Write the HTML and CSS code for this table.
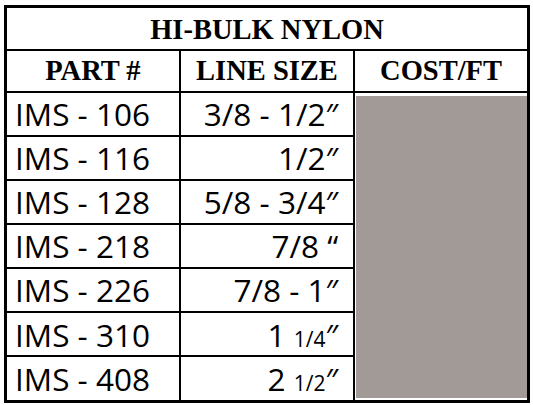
FILE: index.html
```html
<!DOCTYPE html>
<html lang="en">
<head>
    <meta charset="UTF-8">
    <title>Hi-Bulk Nylon</title>
    <link rel="stylesheet" href="styles.css">
</head>
<body>
    <table class="price-table">
        <tr class="title-row">
            <th colspan="3">HI-BULK NYLON</th>
        </tr>
        <tr class="head-row">
            <th>PART #</th>
            <th>LINE SIZE</th>
            <th>COST/FT</th>
        </tr>
        <tr>
            <td class="part">IMS - 106</td>
            <td class="size">3/8 - 1/2″</td>
            <td class="cost" rowspan="7"><div class="cost-fill"></div></td>
        </tr>
        <tr>
            <td class="part">IMS - 116</td>
            <td class="size">1/2″</td>
        </tr>
        <tr>
            <td class="part">IMS - 128</td>
            <td class="size">5/8 - 3/4″</td>
        </tr>
        <tr>
            <td class="part">IMS - 218</td>
            <td class="size">7/8 “</td>
        </tr>
        <tr>
            <td class="part">IMS - 226</td>
            <td class="size">7/8 - 1″</td>
        </tr>
        <tr>
            <td class="part">IMS - 310</td>
            <td class="size">1 <span class="frac">1/4</span>″</td>
        </tr>
        <tr>
            <td class="part">IMS - 408</td>
            <td class="size">2 <span class="frac">1/2</span>″</td>
        </tr>
    </table>
</body>
</html>
```

FILE: styles.css
```css
/* Page */
body {
    margin: 0;
    padding: 5px 3px 0 4px;
    background-color: #fff;
}

/* Table */
.price-table {
    width: 526px;
    border-collapse: collapse;
    border: 3px solid #000;
    table-layout: fixed;
}

.price-table th,
.price-table td {
    border: 2px solid #000;
    padding: 0;
}

/* Header rows */
.price-table th {
    font-family: "Liberation Serif", "Times New Roman", serif;
    font-weight: bold;
    font-size: 28.5px;
    color: #000;
    text-align: center;
}

.title-row {
    height: 43px;
}

.title-row th {
    padding-top: 3px;
}

.head-row {
    height: 42px;
}

.head-row th {
    padding-top: 1px;
}

/* Body rows */
.price-table td {
    font-family: "Open Sans", sans-serif;
    font-size: 31.5px;
    color: #000;
    height: 42px;
    line-height: 1;
}

.part {
    text-align: left;
    padding-left: 8px !important;
}

.size {
    text-align: right;
    padding-right: 15px !important;
}

.frac {
    font-size: 21px;
}

/* Cost column fill */
.cost {
    padding: 3px 0 2px 1px !important;
    vertical-align: top;
}

.cost-fill {
    height: 100%;
    min-height: 302px;
    background-color: #a19a96;
}
```
